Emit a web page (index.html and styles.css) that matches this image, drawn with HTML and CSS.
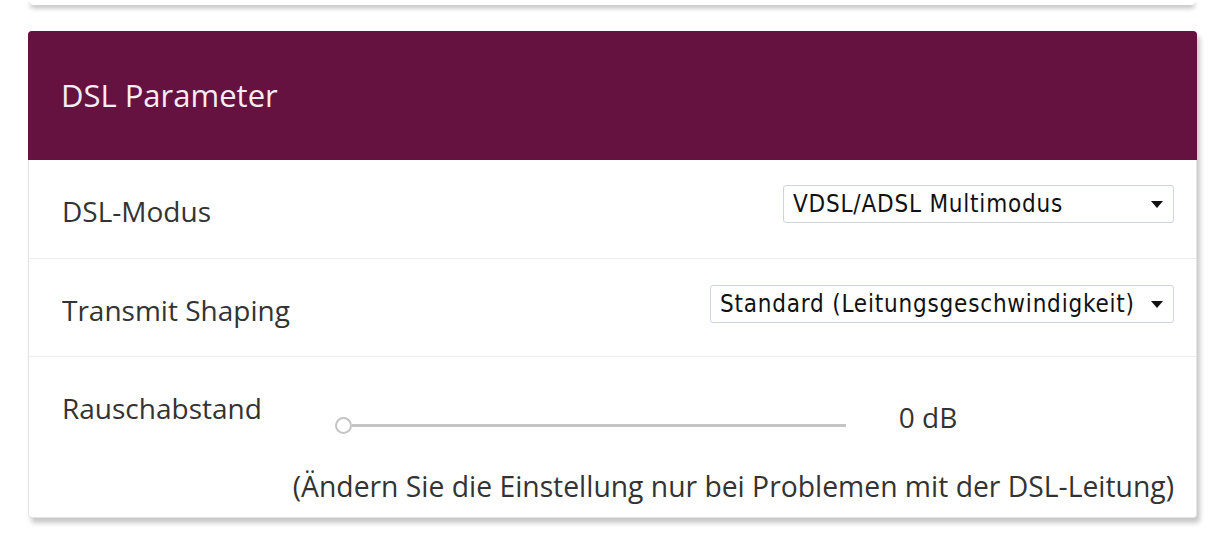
FILE: index.html
```html
<!DOCTYPE html>
<html lang="de">
<head>
<meta charset="utf-8">
<title>DSL Parameter</title>
<link rel="stylesheet" href="styles.css">
</head>
<body>
<div class="prev-card"></div>
<section class="card">
  <header class="card-head">DSL Parameter</header>
  <div class="row row-select">
    <div class="label">DSL-Modus</div>
    <div class="select sel-mode">
      <span class="sel-text">VDSL/ADSL Multimodus</span>
      <svg class="arrow" width="12" height="7" viewBox="0 0 12 7"><path d="M0 0H12L6 7Z" fill="#111"/></svg>
    </div>
  </div>
  <div class="row row-select row2">
    <div class="label">Transmit Shaping</div>
    <div class="select sel-shape">
      <span class="sel-text">Standard (Leitungsgeschwindigkeit)</span>
      <svg class="arrow" width="12" height="7" viewBox="0 0 12 7"><path d="M0 0H12L6 7Z" fill="#111"/></svg>
    </div>
  </div>
  <div class="row row-slider">
    <div class="slider-line">
      <div class="label">Rauschabstand</div>
      <div class="slider">
        <span class="knob"></span>
        <span class="track"></span>
      </div>
      <div class="value">0 dB</div>
    </div>
    <div class="note">(Ändern Sie die Einstellung nur bei Problemen mit der DSL-Leitung)</div>
  </div>
</section>
</body>
</html>
```

FILE: styles.css
```css
html, body {
  margin: 0;
  padding: 0;
  background: #ffffff;
}
body {
  font-family: "Open Sans", "Noto Sans", sans-serif;
  color: #333333;
  padding-bottom: 30px;
}
.prev-card {
  margin: 0 26px 0 30px;
  height: 5px;
  background: #fff;
  border-radius: 0 0 4px 4px;
  box-shadow: 0 3px 5px rgba(0,0,0,0.28);
}
.card {
  margin: 26px 24px 0 28px;
  width: 1169px;
  background: #fff;
  border-radius: 4px;
  border: 1px solid #e4e4e4;
  border-top: none;
  box-sizing: border-box;
  box-shadow: 3px 5px 5px rgba(0,0,0,0.22);
}
.card-head {
  height: 129px;
  background: #651241;
  color: #f4eef2;
  font-size: 31px;
  line-height: 129px;
  padding-left: 33px;
  box-sizing: border-box;
  margin: 0 -1px;
  border-radius: 4px 4px 0 0;
}
.row {
  border-top: 1px solid #ececec;
  padding: 0 22px 0 33px;
}
.card-head + .row {
  border-top: none;
}
.label {
  font-size: 28px;
  line-height: 36px;
  color: #333;
}
.row-select {
  height: 98px;
  display: flex;
  align-items: flex-start;
  justify-content: space-between;
  box-sizing: border-box;
}
.row-select .label {
  margin-top: 33px;
}
.select {
  margin-top: 25px;
  height: 38px;
  border: 1px solid #cfd3e0;
  border-radius: 3px;
  box-sizing: border-box;
  display: flex;
  align-items: center;
  justify-content: space-between;
  padding: 0 10px 0 9px;
  font-family: "DejaVu Sans Condensed", "DejaVu Sans", sans-serif;
  font-size: 24px;
  letter-spacing: 0.8px;
  color: #111;
}
.sel-mode { width: 391px; }
.sel-shape { width: 464px; margin-top: 26px; }
.arrow { display: block; }
.row-slider {
  height: 161px;
  box-sizing: border-box;
  padding-top: 33px;
}
.slider-line {
  display: flex;
  align-items: flex-start;
}
.slider {
  margin-left: 73px;
  margin-top: 27px;
  width: 511px;
  display: flex;
  align-items: center;
}
.knob {
  width: 17px;
  height: 17px;
  border: 2.5px solid #c4c4c4;
  border-radius: 50%;
  box-sizing: border-box;
  background: #fff;
  flex: none;
}
.track {
  flex: 1;
  height: 3px;
  background: #c4c4c4;
}
.value {
  margin-left: 53px;
  margin-top: 9px;
  font-size: 28px;
  line-height: 36px;
}
.note {
  text-align: right;
  font-size: 28.3px;
  line-height: 36px;
  margin-top: 33px;
}
```
